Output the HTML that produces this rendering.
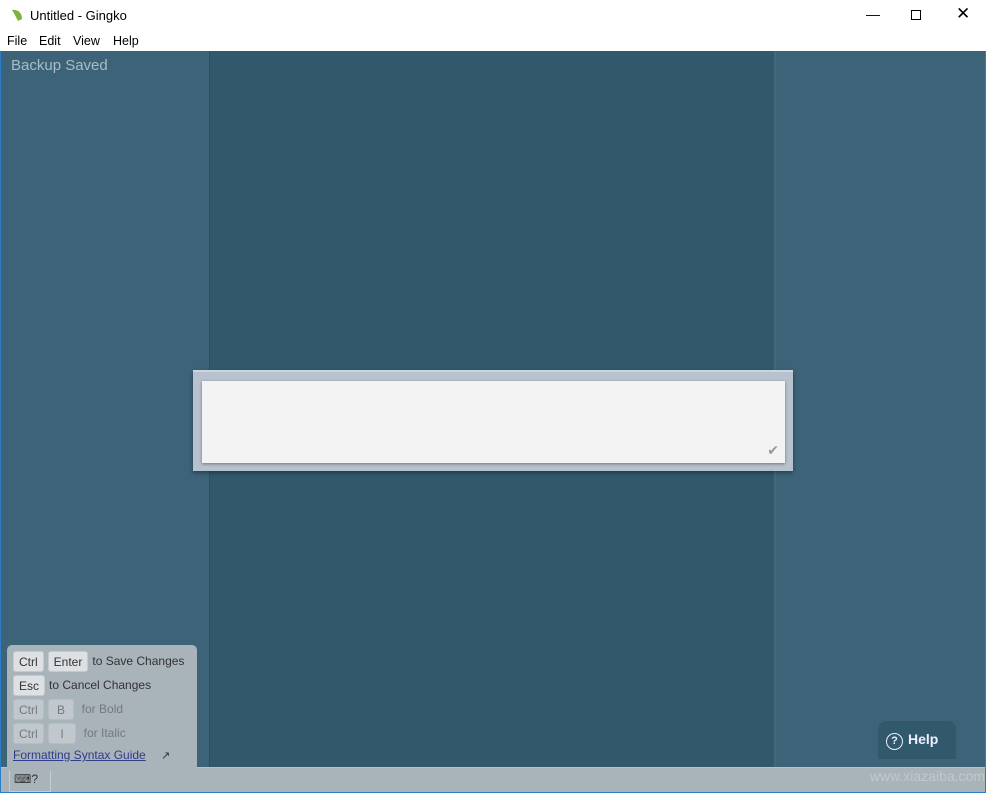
<!DOCTYPE html>
<html><head><meta charset="utf-8"><style>
*{margin:0;padding:0;box-sizing:border-box}
body{width:986px;height:793px;overflow:hidden;font-family:"Liberation Sans","DejaVu Sans",sans-serif;background:#fff;position:relative}
.title{position:absolute;left:0;top:0;width:986px;height:31px;background:#fff;font-size:13px;color:#000}
.menu{position:absolute;left:0;top:31px;width:986px;height:20px;background:#fff;font-size:12.5px}
.menu span{position:absolute;top:3px}
.app{position:absolute;left:1px;top:51px;width:984px;height:741px;background:#3c6378}
.col{position:absolute;left:208px;top:0;width:567px;height:716px;background:#32586b;border-left:1px solid #2d4f60;border-right:2px solid #3f6a7e}
.bottom{position:absolute;left:0;top:716px;width:984px;height:25px;background:#a9b3ba;border-top:1px solid #b8c2c9}
.card{position:absolute;left:192px;top:319px;width:600px;height:101px;background:#b8c2ce;border-top:2px solid #c9d5e0;box-shadow:0 2px 4px rgba(0,0,0,.35)}
.inner{position:absolute;left:9px;top:9px;width:583px;height:82px;background:#f3f3f3;box-shadow:0 1px 3px rgba(0,0,0,.4)}
.tip{position:absolute;left:6px;top:594px;width:190px;height:126px;background:#a9b3ba;border-radius:5px;font-size:12px;color:#333;z-index:2}
.row{position:absolute;left:6px;height:22px;display:flex;align-items:center;gap:4px}
.k{display:inline-block;background:#dde1e4;border:1px solid #c4cacf;border-radius:3px;padding:1px 5px;height:21px;line-height:18px;color:#333}
.dim{opacity:.45}
</style></head><body>
<div class="title">
<svg style="position:absolute;left:10px;top:8px" width="14" height="14" viewBox="0 0 14 14"><path d="M2 2 C7 1 12 4 12 11 L8 13 C6 9 4 5 2 2Z" fill="#7bb241"/></svg>
<span style="position:absolute;left:30px;top:8px">Untitled - Gingko</span>
<span style="position:absolute;left:866px;top:6px;font-size:14px">—</span>
<div style="position:absolute;left:911px;top:10px;width:10px;height:10px;border:1px solid #000"></div>
<span style="position:absolute;left:956px;top:4px;font-size:17px">✕</span>
</div>
<div class="menu"><span style="left:7px">File</span><span style="left:39px">Edit</span><span style="left:73px">View</span><span style="left:113px">Help</span></div>
<div class="app">
<div class="col"></div>
<div style="position:absolute;left:10px;top:6px;font-size:15px;color:#a9bcc6">Backup Saved</div>
<div class="card"><div class="inner"><span style="position:absolute;right:6px;bottom:4px;color:#999;font-size:14px">✔</span></div></div>
<div class="bottom"><div style="position:absolute;left:8px;top:0;width:42px;height:24px;border:1px solid #c6ced3;font-size:12px;padding:3px 4px;color:#333">⌨?</div>
<div style="position:absolute;right:0;top:0;font-size:14px;color:#c0c8cc">www.xiazaiba.com</div></div>
<div class="tip">
<div class="row" style="top:5px"><span class="k">Ctrl</span><span class="k">Enter</span><span>to Save Changes</span></div>
<div class="row" style="top:29px"><span class="k">Esc</span><span>to Cancel Changes</span></div>
<div class="row dim" style="top:53px"><span class="k">Ctrl</span><span class="k">&nbsp;B&nbsp;</span><span>&nbsp;for Bold</span></div>
<div class="row dim" style="top:77px"><span class="k">Ctrl</span><span class="k">&nbsp;&nbsp;I&nbsp;&nbsp;</span><span>&nbsp;for Italic</span></div>
<div style="position:absolute;left:6px;top:103px;color:#2f3d88;text-decoration:underline">Formatting Syntax Guide</div>
<span style="position:absolute;left:154px;top:104px;font-size:11px">↗</span>
</div>
<div style="position:absolute;left:877px;top:670px;width:78px;height:38px;background:#31596c;border-radius:8px 8px 0 0;color:#eef;font-weight:bold;font-size:14px;padding:10px 0 0 8px"><span style="display:inline-block;width:17px;height:17px;border:1.5px solid #eef;border-radius:50%;text-align:center;font-size:11px;line-height:14px;margin-right:5px">?</span>Help</div>
</div>
<div style="position:absolute;left:0;top:51px;width:1px;height:742px;background:#2b7dc8"></div>
<div style="position:absolute;right:0;top:51px;width:1px;height:742px;background:#2b7dc8"></div>
<div style="position:absolute;left:0;bottom:0;width:986px;height:1px;background:#2b7dc8"></div>
</body></html>
